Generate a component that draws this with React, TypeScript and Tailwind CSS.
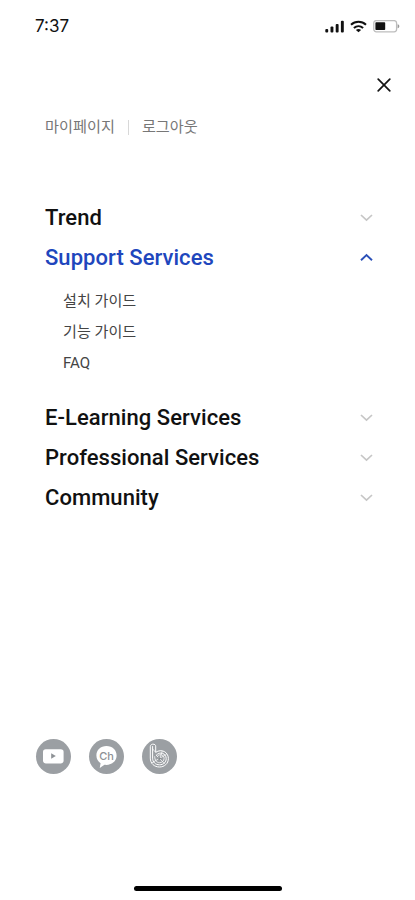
type Section = { title: string; children?: string[] };

const sections: Section[] = [
  { title: "Trend" },
  { title: "Support Services", children: ["설치 가이드", "기능 가이드", "FAQ"] },
  { title: "E-Learning Services" },
  { title: "Professional Services" },
  { title: "Community" },
];

function StatusBar() {
  return (
    <div className="flex h-[52px] items-center justify-between pl-[35px] pr-[15px]">
      <span className="font-['Inter',sans-serif] text-[17px] leading-5 font-normal text-[#111]">7:37</span>
      <div className="flex items-center">
        <svg width="19" height="13" viewBox="0 0 19 13" fill="#111">
          <rect x="0.3" y="9" width="2.9" height="3.6" rx="1" />
          <rect x="5.5" y="6.6" width="2.9" height="6" rx="1" />
          <rect x="10.7" y="4" width="2.9" height="8.6" rx="1" />
          <rect x="15.9" y="0.8" width="2.9" height="11.8" rx="1" />
        </svg>
        <svg className="ml-[6px]" width="17" height="13" viewBox="0 0 17 13" fill="none" stroke="#111" strokeWidth="2">
          <path d="M1 4.8C5.2 0.8 11.8 0.8 16 4.8" />
          <path d="M3.9 8C6.6 5.5 10.4 5.5 13.1 8" />
          <path d="M8.5 12.3L5.9 9.9C7.4 8.6 9.6 8.6 11.1 9.9Z" fill="#111" stroke="none" />
        </svg>
        <svg className="ml-[6px]" width="27" height="13" viewBox="0 0 27 13">
          <rect x="0.8" y="0.6" width="22.8" height="11.2" rx="2.5" fill="white" stroke="#bdbdbd" strokeWidth="1.3" />
          <rect x="2.4" y="2.2" width="9.8" height="7.8" rx="0.8" fill="#111" />
          <path d="M24.6 4.2C26.9 4.8 26.9 7.6 24.6 8.2Z" fill="#999" />
        </svg>
      </div>
    </div>
  );
}

function Chevron({ open }: { open: boolean }) {
  return (
    <svg className="mb-px" width="13" height="9" viewBox="0 0 13 9" fill="none" strokeWidth={open ? 1.9 : 1.7} stroke={open ? "#2b50b8" : "#c6c6c6"}>
      <path d={open ? "M1 7.3L6.5 2.1L12 7.3" : "M1 2L6.5 7.2L12 2"} />
    </svg>
  );
}

function SocialLinks() {
  return (
    <div className="flex gap-[17px]">
      <svg width="36" height="36" viewBox="0 0 36 36">
        <circle cx="18.5" cy="18.5" r="17.5" fill="#9b9fa3" />
        <rect x="8" y="11.2" width="20.6" height="14.2" rx="2.8" fill="white" />
        <path d="M16.2 15.2L20.8 17.9L16.2 20.7Z" fill="#8d9195" />
      </svg>
      <svg width="36" height="36" viewBox="0 0 36 36">
        <circle cx="18.5" cy="18.5" r="17.5" fill="#9b9fa3" />
        <path d="M18.5 8.1C12.6 8.1 8.4 12.2 8.4 17.5C8.4 21 10.1 23.7 12.6 25.2L11.7 30L16.5 26.8C23.3 27.6 28.6 23.3 28.6 17.5C28.6 12.2 24.4 8.1 18.5 8.1Z" fill="white" />
        <text x="18.6" y="21.5" textAnchor="middle" fontFamily="Inter, sans-serif" fontSize="11" fontWeight="500" fill="#8d9195">Ch</text>
      </svg>
      <svg width="36" height="36" viewBox="0 0 36 36">
        <circle cx="18.5" cy="18.5" r="17.5" fill="#9b9fa3" />
        <g transform="translate(0.5 0)" fill="none" stroke="white" strokeWidth="1" strokeLinejoin="round" strokeLinecap="round">
          <path d="M8.8 8.3C8.8 5.5 14 5.3 14.2 8.1V14.3C20 10.4 26.9 14 26.9 20.6C26.9 25.6 22.8 29 18 29C12.8 29 8.8 25.5 8.8 20.5Z" />
          <path d="M11.1 8.5V20.2C11.1 24.2 14 26.8 18 26.8C21.8 26.8 24.7 24.2 24.7 20.6C24.7 15.5 18.5 12.8 14.8 17.2" />
          <path d="M13.2 18.7C13.2 22.3 15.2 24.7 18 24.7C20.5 24.7 22.6 22.9 22.6 20.4C22.6 17 18.3 15.2 16 18.2" strokeWidth="0.8" />
          <path d="M11.2 11L14 14.2M10.5 24.8L24.8 16.4M14.8 17.2L23 25.6M20.7 13.5L18.2 20.6" strokeWidth="0.7" />
          <path d="M16.8 18.8L20 20.4L17 22.3Z" fill="#85898d" stroke="none" />
        </g>
      </svg>
    </div>
  );
}

export default function App() {
  return (
    <div className="flex h-[900px] w-full flex-col overflow-hidden bg-white font-['Roboto','Noto_Sans_CJK_KR',sans-serif]">
      <StatusBar />
      <div className="flex h-[65px] items-center justify-end pr-[24px]">
        <button aria-label="닫기">
          <svg width="14" height="14" viewBox="0 0 14 14" stroke="#151515" strokeWidth="1.7" strokeLinecap="round">
            <path d="M1.2 1.2L12.8 12.8M12.8 1.2L1.2 12.8" />
          </svg>
        </button>
      </div>
      <div className="flex h-5 items-center pl-[45px] text-[15.2px] leading-5 text-[#777]">
        <span>마이페이지</span>
        <span className="mr-[13px] ml-[13px] h-[15px] w-px bg-[#d8d8d8]" />
        <span>로그아웃</span>
      </div>
      <nav className="mt-[61px]">
        {sections.map(({ title, children }) => (
          <div key={title}>
            <button
              className={`flex h-10 w-full items-center justify-between pr-[42px] pl-[45px] text-left text-[22px] leading-10 font-medium tracking-[0.05px] ${children ? "text-[#2046bd]" : "text-[#111]"}`}
            >
              <span>{title}</span>
              <Chevron open={!!children} />
            </button>
            {children && (
              <ul className="h-[120px] pt-[8px] pl-[63px] text-[15.1px] text-[#444]">
                {children.map((c) => (
                  <li key={c} className="h-[31px] leading-[31px]">{c}</li>
                ))}
              </ul>
            )}
          </div>
        ))}
      </nav>
      <div className="mt-auto flex flex-col pb-[9px]">
        <div className="pl-[35px]">
          <SocialLinks />
        </div>
        <div className="mt-[112px] ml-[134px] h-[5px] w-[148px] rounded-full bg-black" />
      </div>
    </div>
  );
}
